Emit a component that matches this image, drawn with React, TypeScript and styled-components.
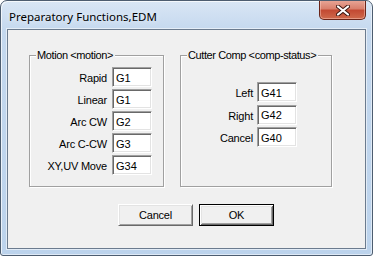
import React from "react";
import styled, { createGlobalStyle } from "styled-components";

const GlobalStyle = createGlobalStyle`
  html, body {
    margin: 0;
    padding: 0;
    background: #ffffff;
  }
  body {
    font-family: "Liberation Sans", Arial, sans-serif;
  }
`;

const motionRows = [
  { label: "Rapid", value: "G1" },
  { label: "Linear", value: "G1" },
  { label: "Arc CW", value: "G2" },
  { label: "Arc C-CW", value: "G3" },
  { label: "XY,UV Move", value: "G34" },
];

const compRows = [
  { label: "Left", value: "G41" },
  { label: "Right", value: "G42" },
  { label: "Cancel", value: "G40" },
];

const CloseIcon = () => (
  <svg width="14" height="11" viewBox="0 0 14 11">
    <path d="M2 1.5 L12 9.5 M12 1.5 L2 9.5" stroke="#3c1610" strokeWidth="4" strokeLinecap="round" />
    <path d="M2 1.5 L12 9.5 M12 1.5 L2 9.5" stroke="#ffffff" strokeWidth="2.2" strokeLinecap="round" />
  </svg>
);

const App = () => {
  return (
    <>
      <GlobalStyle />
      <Window>
        <TitleBar>
          <Title>Preparatory Functions,EDM</Title>
          <CloseButton>
            <CloseIcon />
          </CloseButton>
        </TitleBar>
        <Client>
          <GroupRow>
            <Group $width={135} $top={5}>
              <Caption>Motion &lt;motion&gt;</Caption>
              <Fields $labelWidth={77} $gap={5} $rowGap={2}>
                {motionRows.map((r) => (
                  <React.Fragment key={r.label}>
                    <FieldLabel>{r.label}</FieldLabel>
                    <TextBox readOnly value={r.value} />
                  </React.Fragment>
                ))}
              </Fields>
            </Group>
            <Group $width={152} $top={20}>
              <Caption>Cutter Comp &lt;comp-status&gt;</Caption>
              <Fields $labelWidth={72} $gap={4} $rowGap={2.5}>
                {compRows.map((r) => (
                  <React.Fragment key={r.label}>
                    <FieldLabel>{r.label}</FieldLabel>
                    <TextBox readOnly value={r.value} />
                  </React.Fragment>
                ))}
              </Fields>
            </Group>
          </GroupRow>
          <ButtonRow>
            <PushButton>Cancel</PushButton>
            <PushButton $default>OK</PushButton>
          </ButtonRow>
        </Client>
      </Window>
    </>
  );
};

const Window = styled.div`
  box-sizing: border-box;
  width: 373px;
  height: 256px;
  border: 1px solid #4d5d70;
  border-radius: 7px 7px 3px 3px;
  background: linear-gradient(to bottom, #d9e6f5 0px, #c4d8ee 30px, #bcd3ec 100%);
  box-shadow: inset 1px 1px 0 rgba(255, 255, 255, 0.7), inset -1px -1px 0 rgba(255, 255, 255, 0.5);
  display: flex;
  flex-direction: column;
  padding: 0 6px 6px 6px;
  overflow: hidden;
`;

const TitleBar = styled.div`
  height: 28px;
  display: flex;
  align-items: center;
  justify-content: space-between;
  padding-left: 2px;
`;

const Title = styled.span`
  font-family: "Noto Sans", "Open Sans", sans-serif;
  font-size: 11.5px;
  color: #000;
  margin-top: 2px;
  text-shadow: 0 0 6px rgba(255, 255, 255, 0.9);
`;

const CloseButton = styled.div`
  align-self: flex-start;
  box-sizing: border-box;
  width: 47px;
  height: 20px;
  margin-top: -1px;
  border: 1px solid #6a2418;
  border-top: none;
  border-radius: 0 0 5px 5px;
  background: linear-gradient(to bottom, #e9a899 0%, #d9806d 45%, #c34a33 55%, #cf6a4c 100%);
  box-shadow: inset 0 0 0 1px rgba(255, 210, 200, 0.45);
  display: flex;
  align-items: center;
  justify-content: center;
  padding-top: 1px;
`;

const Client = styled.div`
  flex: 1;
  background: #f0f0f0;
  border: 1px solid #6b7b8e;
  box-shadow: 0 0 0 1px rgba(255, 255, 255, 0.55);
  display: flex;
  flex-direction: column;
  padding: 25px 0 0 21px;
`;

const GroupRow = styled.div`
  display: flex;
  gap: 16px;
  height: 132px;
`;

const Group = styled.div<{ $width: number; $top: number }>`
  box-sizing: border-box;
  width: ${(p) => p.$width}px;
  border: 1px solid #a0a0a0;
  box-shadow: 1px 1px 0 #ffffff, inset 1px 1px 0 #ffffff;
  display: flex;
  flex-direction: column;

  & > div:last-child {
    margin-top: ${(p) => p.$top}px;
  }
`;

const Caption = styled.span`
  align-self: flex-start;
  margin: -7px 0 0 6px;
  padding: 0 2px 0 1px;
  height: 13px;
  line-height: 13px;
  background: #f0f0f0;
  font-size: 11px;
  letter-spacing: -0.4px;
  color: #000;
  white-space: nowrap;
`;

const Fields = styled.div<{ $labelWidth: number; $gap: number; $rowGap: number }>`
  display: grid;
  grid-template-columns: ${(p) => p.$labelWidth}px 40px;
  column-gap: ${(p) => p.$gap}px;
  row-gap: ${(p) => p.$rowGap}px;
  align-items: center;
`;

const FieldLabel = styled.span`
  text-align: right;
  font-size: 11px;
  letter-spacing: -0.2px;
  color: #000;
  white-space: nowrap;
  padding-top: 2px;
`;

const TextBox = styled.input`
  box-sizing: border-box;
  width: 40px;
  height: 20px;
  margin: 0;
  padding: 1px 0 0 3px;
  border: 1px solid;
  border-color: #a0a0a0 #ffffff #ffffff #a0a0a0;
  box-shadow: inset 1px 1px 0 #696969, inset -1px -1px 0 #e3e3e3;
  background: #ffffff;
  font-family: "Liberation Sans", Arial, sans-serif;
  font-size: 11px;
  color: #000;
  outline: none;
`;

const ButtonRow = styled.div`
  display: flex;
  gap: 6px;
  margin: 17px 0 0 89px;
`;

const PushButton = styled.button<{ $default?: boolean }>`
  box-sizing: border-box;
  width: 75px;
  height: 22px;
  margin: 0;
  padding: 0;
  background: #f0f0f0;
  font-family: "Liberation Sans", Arial, sans-serif;
  font-size: 11px;
  letter-spacing: -0.2px;
  color: #000;
  border: 1px solid;
  border-color: ${(p) => (p.$default ? "#000000" : "#ffffff #696969 #696969 #ffffff")};
  box-shadow: ${(p) =>
    p.$default
      ? "inset 1px 1px 0 #ffffff, inset -1px -1px 0 #696969, inset 2px 2px 0 #e3e3e3, inset -2px -2px 0 #a0a0a0"
      : "inset 1px 1px 0 #e3e3e3, inset -1px -1px 0 #a0a0a0"};
`;

export default App;
